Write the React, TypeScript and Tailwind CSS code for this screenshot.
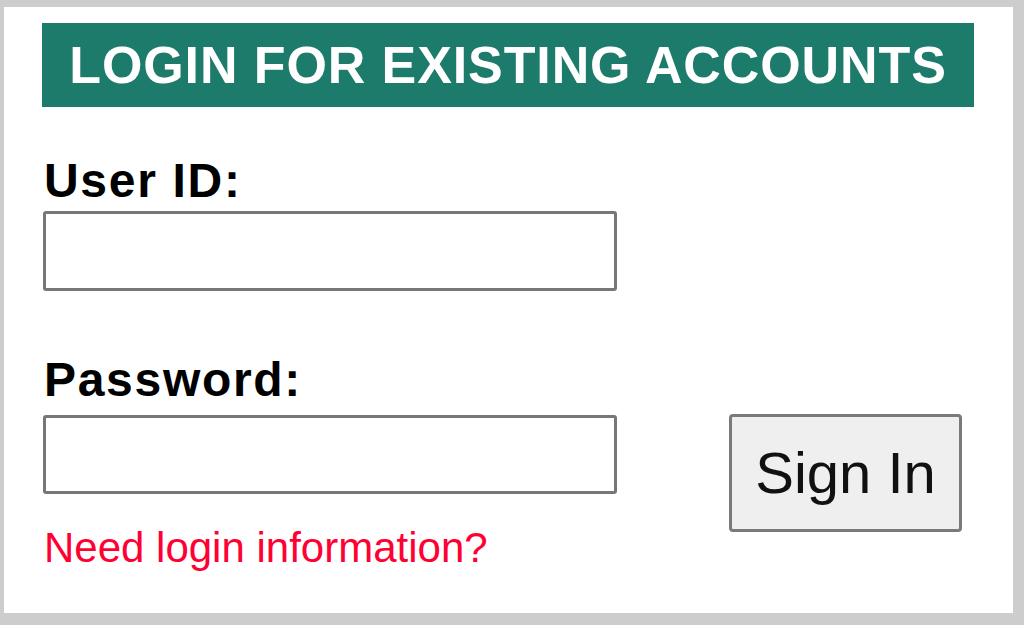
export default function App() {
  return (
    <div
      className="w-[1024px] h-[625px] bg-[#cdcdcd] pt-[7px] pl-[4px] pr-[11px] pb-[12px]"
      style={{ fontFamily: '"Liberation Sans", Arial, sans-serif' }}
    >
      <div className="h-full w-full bg-white pl-[38px] pt-[16px]">
        <div className="flex h-[84px] w-[932px] items-center justify-center bg-[#1d7b6b]">
          <span className="text-[52px] font-bold leading-none tracking-[0.9px] text-white">
            LOGIN FOR EXISTING ACCOUNTS
          </span>
        </div>

        <div className="mt-[50px] flex">
          <div className="flex w-[574px] flex-col">
            <label className="ml-[2px] text-[48px] font-bold leading-none tracking-[1.7px] text-black">User ID:</label>
            <input
              type="text"
              className="mt-[6px] ml-[1px] h-[80px] w-[574px] rounded-[3px] border-[3px] border-[#777777] bg-white"
            />
            <label className="ml-[2px] mt-[65px] text-[48px] font-bold leading-none tracking-[1.7px] text-black">
              Password:
            </label>
            <input
              type="password"
              className="mt-[11px] ml-[1px] h-[79px] w-[574px] rounded-[3px] border-[3px] border-[#777777] bg-white"
            />
            <a href="#" className="ml-[2px] mt-[33px] text-[42px] leading-none text-[#ff0033]">
              Need login information?
            </a>
          </div>

          <div className="ml-[113px] pt-[257px]">
            <button className="flex h-[118px] w-[233px] items-center justify-center rounded-[4px] border-[3px] border-[#7a7a7a] bg-[#efefef] text-[58px] leading-none text-[#111111]">
              Sign In
            </button>
          </div>
        </div>
      </div>
    </div>
  );
}
